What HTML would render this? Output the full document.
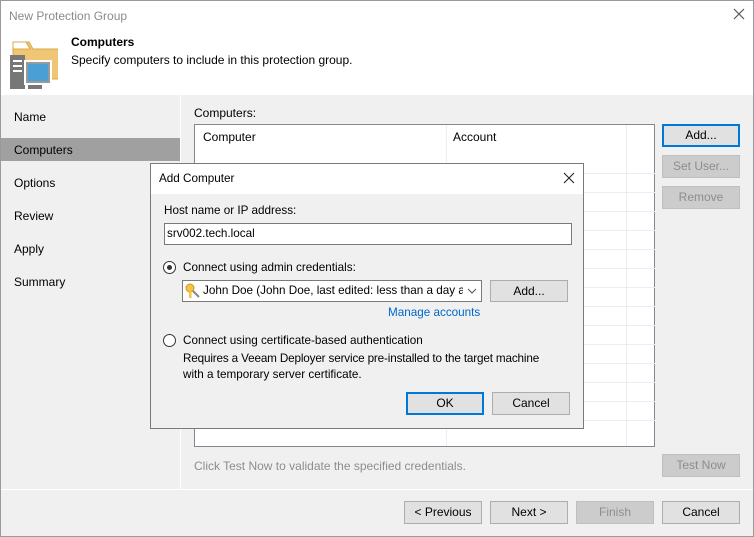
<!DOCTYPE html>
<html><head><style>
*{box-sizing:border-box;margin:0;padding:0}
body{width:754px;height:537px;background:#f0f0f0;font-family:"Liberation Sans",sans-serif;font-size:12px;color:#000;position:relative;overflow:hidden}
.a{position:absolute}
.btn{position:absolute;background:#e1e1e1;border:1px solid #adadad;text-align:center;line-height:20px;font-size:12px}
.dis{background:#cccccc;border-color:#bfbfbf;color:#8d8d8d}
.foc{border:2px solid #0078d7;line-height:18px}
.hl{position:absolute;left:1px;width:459px;height:1px;background:#eaeef3}
.x{position:absolute;width:14px;height:14px}
</style></head><body>
<div class="a" style="left:0;top:0;width:754px;height:537px;border:1px solid #9a9a9a"></div>
<div class="a" style="left:1px;top:1px;width:752px;height:94px;background:#fff"></div>
<div class="a" style="left:9px;top:9px;color:#8a8a8a;font-size:12px">New Protection Group</div>
<svg class="x" style="left:733px;top:8px" width="12" height="12"><path d="M1 1L11 11M11 1L1 11" stroke="#555" stroke-width="1.2"/></svg>
<svg class="a" style="left:10px;top:40px" width="48" height="50">
<path d="M3 2h16l4 7h33v30H3z" fill="#f0c674" stroke="#d9a94a"/>
<path d="M3 2h13l4 7H3z" fill="#fff" stroke="#d9a94a"/>
<rect x="0" y="15" width="15" height="34" fill="#777"/>
<rect x="3" y="20" width="9" height="2" fill="#fff"/><rect x="3" y="25" width="9" height="2" fill="#fff"/><rect x="3" y="30" width="9" height="2" fill="#fff"/>
<rect x="14" y="20" width="28" height="25" fill="#fff"/><rect x="16" y="22" width="24" height="21" fill="#999"/><rect x="18" y="24" width="20" height="17" fill="#4a9fd4"/>
<rect x="18" y="45" width="14" height="4" fill="#777"/>
</svg>
<div class="a" style="left:71px;top:35px;font-weight:bold">Computers</div>
<div class="a" style="left:71px;top:53px">Specify computers to include in this protection group.</div>
<div class="a" style="left:180px;top:95px;width:1px;height:394px;background:#fff"></div>
<div class="a" style="left:1px;top:489px;width:752px;height:1px;background:#fff"></div>
<div class="a" style="left:14px;top:110px">Name</div>
<div class="a" style="left:1px;top:138px;width:179px;height:23px;background:#a0a0a0"></div>
<div class="a" style="left:14px;top:143px">Computers</div>
<div class="a" style="left:14px;top:176px">Options</div>
<div class="a" style="left:14px;top:209px">Review</div>
<div class="a" style="left:14px;top:242px">Apply</div>
<div class="a" style="left:14px;top:275px">Summary</div>
<div class="a" style="left:194px;top:106px">Computers:</div>
<div class="a" style="left:194px;top:124px;width:461px;height:323px;background:#fff;border:1px solid #828790">
<div class="a" style="left:251px;top:0;width:1px;height:321px;background:#eaeef3"></div>
<div class="a" style="left:431px;top:0;width:1px;height:321px;background:#eaeef3"></div>
<div class="a" style="left:8px;top:5px">Computer</div>
<div class="a" style="left:258px;top:5px">Account</div>
<div class="hl" style="top:48px"></div><div class="hl" style="top:67px"></div><div class="hl" style="top:86px"></div><div class="hl" style="top:105px"></div><div class="hl" style="top:124px"></div><div class="hl" style="top:143px"></div><div class="hl" style="top:162px"></div><div class="hl" style="top:181px"></div><div class="hl" style="top:200px"></div><div class="hl" style="top:219px"></div><div class="hl" style="top:238px"></div><div class="hl" style="top:257px"></div><div class="hl" style="top:276px"></div><div class="hl" style="top:295px"></div>
</div>
<div class="btn foc" style="left:662px;top:124px;width:78px;height:23px">Add...</div>
<div class="btn dis" style="left:662px;top:155px;width:78px;height:23px">Set User...</div>
<div class="btn dis" style="left:662px;top:186px;width:78px;height:23px">Remove</div>
<div class="a" style="left:194px;top:459px;color:#8d8d8d">Click Test Now to validate the specified credentials.</div>
<div class="btn dis" style="left:662px;top:454px;width:78px;height:23px">Test Now</div>
<div class="btn" style="left:404px;top:501px;width:78px;height:23px">&lt; Previous</div>
<div class="btn" style="left:490px;top:501px;width:78px;height:23px">Next &gt;</div>
<div class="btn dis" style="left:576px;top:501px;width:78px;height:23px">Finish</div>
<div class="btn" style="left:662px;top:501px;width:78px;height:23px">Cancel</div>

<div class="a" style="left:150px;top:163px;width:434px;height:266px;background:#f0f0f0;border:1px solid #7a7a7a;font-size:11.7px">
<div class="a" style="left:0;top:0;width:432px;height:30px;background:#fff"></div>
<div class="a" style="left:8px;top:8px">Add Computer</div>
<svg class="a" style="left:412px;top:8px" width="12" height="12"><path d="M1 1L11 11M11 1L1 11" stroke="#222" stroke-width="1.1"/></svg>
<div class="a" style="left:13px;top:40px">Host name or IP address:</div>
<div class="a" style="left:13px;top:59px;width:408px;height:22px;background:#fff;border:1px solid #7a7a7a;padding:3px 2px">srv002.tech.local</div>
<div class="a" style="left:12px;top:97px;width:13px;height:13px;border:1px solid #333;border-radius:50%;background:#fff"><div class="a" style="left:3px;top:3px;width:5px;height:5px;border-radius:50%;background:#333"></div></div>
<div class="a" style="left:32px;top:97px">Connect using admin credentials:</div>
<div class="a" style="left:31px;top:116px;width:300px;height:22px;background:#fff;border:1px solid #7a7a7a"><div class="a" style="left:20px;top:3px;width:260px;white-space:nowrap;overflow:hidden">John Doe (John Doe, last edited: less than a day a</div></div>
<svg class="a" style="left:34px;top:119px" width="16" height="16"><circle cx="5" cy="5" r="4" fill="#f5c242" stroke="#c9982a"/><rect x="4" y="8" width="2.5" height="7" fill="#f5c242"/><path d="M8 8l6 6" stroke="#888" stroke-width="2"/></svg>
<svg class="a" style="left:316px;top:124px" width="10" height="6"><path d="M1 1l4 4 4-4" stroke="#555" fill="none"/></svg>
<div class="btn" style="left:339px;top:116px;width:78px;height:22px">Add...</div>
<div class="a" style="left:237px;top:142px;color:#0066cc">Manage accounts</div>
<div class="a" style="left:12px;top:170px;width:13px;height:13px;border:1px solid #333;border-radius:50%;background:#fff"></div>
<div class="a" style="left:32px;top:170px">Connect using certificate-based authentication</div>
<div class="a" style="left:32px;top:188px;letter-spacing:-0.15px">Requires a Veeam Deployer service pre-installed to the target machine</div>
<div class="a" style="left:32px;top:204px">with a temporary server certificate.</div>
<div class="btn foc" style="left:255px;top:228px;width:78px;height:23px">OK</div>
<div class="btn" style="left:341px;top:228px;width:78px;height:23px">Cancel</div>
</div>
</body></html>
